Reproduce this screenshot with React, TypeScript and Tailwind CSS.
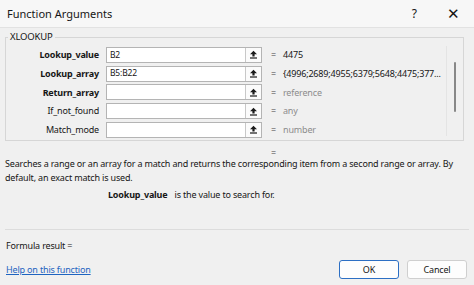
import React from "react";

function RefIcon() {
  return (
    <svg width="9" height="9" viewBox="0 0 9 9">
      <path d="M4.5 0.8 L8 4.3 L5.6 4.3 L5.6 6.4 L3.4 6.4 L3.4 4.3 L1 4.3 Z" fill="#1a1a1a" />
      <rect x="1" y="7.4" width="7" height="1.2" fill="#1a1a1a" />
    </svg>
  );
}

const rows = [
  { label: "Lookup_value", bold: true, input: "B2", value: "4475", gray: false },
  { label: "Lookup_array", bold: true, input: "B5:B22", value: "{4996;2689;4955;6379;5648;4475;377...", gray: false },
  { label: "Return_array", bold: true, input: "", value: "reference", gray: true },
  { label: "If_not_found", bold: false, input: "", value: "any", gray: true },
  { label: "Match_mode", bold: false, input: "", value: "number", gray: true },
];

export default function App() {
  return (
    <div className="w-[474px] h-[285px] bg-[#f0f0f0] font-['Noto_Sans',sans-serif] text-[9px] tracking-[-0.17px] text-[#161616] flex flex-col overflow-hidden">
      <div className="h-[28px] shrink-0 bg-[#f7f7f7] border-b border-[#e2e2e2] flex items-center tracking-normal">
        <span className="pl-[7px] text-[11px] leading-none">Function Arguments</span>
        <span className="ml-auto mr-[30px] text-[12px] leading-none">?</span>
        <span className="mr-[14px] text-[15px] leading-none font-light">✕</span>
      </div>

      <fieldset className="mt-[3px] ml-[5px] w-[459px] border border-[#d6d6d6] pb-[1px] flex">
        <legend className="ml-[2px] px-[2px] leading-[12px] text-[9.5px]">XLOOKUP</legend>
        <div className="flex w-full">
          <div className="flex flex-col pt-[2.5px] w-[440px]">
            {rows.map((r) => (
              <div key={r.label} className="h-[18.75px] flex items-center">
                <div className={`w-[93px] text-right ${r.bold ? "font-bold" : ""}`}>{r.label}</div>
                <div className="ml-[7px] w-[156px] h-[16px] bg-white border border-[#b4b4b4] flex items-center">
                  <span className="pl-[3px] flex-1 text-[8.5px]">{r.input}</span>
                  <div className="w-[16px] h-full border-l border-[#c8c8c8] bg-[#fbfbfb] flex items-center justify-center">
                    <RefIcon />
                  </div>
                </div>
                <span className="ml-[9px] text-[#444]">=</span>
                <span className={`ml-[7px] whitespace-nowrap ${r.gray ? "text-[#8c8c8c]" : ""}`}>{r.value}</span>
              </div>
            ))}
          </div>
          <div className="ml-auto w-[17px] my-[3px] border-l border-[#e4e4e4] flex justify-center pt-[16px]">
            <div className="w-[2px] h-[50px] bg-[#888888] rounded-full" />
          </div>
        </div>
      </fieldset>

      <div className="mt-[7px] h-[9px] leading-[9px] pl-[271px] text-[#444]">=</div>
      <div className="px-[5px] leading-[14px] whitespace-nowrap">
        Searches a range or an array for a match and returns the corresponding item from a second range or array. By
        <br />
        default, an exact match is used.
      </div>
      <div className="mt-[4px] leading-[12px] flex pl-[108px]">
        <span className="font-bold">Lookup_value</span>
        <span className="ml-[7px]">is the value to search for.</span>
      </div>

      <div className="mt-[28px] mx-[5px] border-t border-[#dcdcdc]" />
      <div className="mt-[10px] px-[6px] leading-[12px]">Formula result =</div>
      <div className="mt-[7px] h-[20px] flex items-center px-[6px]">
        <span className="text-[#1f64c0] underline">Help on this function</span>
        <button className="ml-auto w-[60px] h-[19px] bg-[#fdfdfd] border border-[#2c6fc4] rounded-[3px] text-[9px] leading-none">OK</button>
        <button className="ml-[8px] mr-[1px] w-[60px] h-[19px] bg-[#fdfdfd] border border-[#cfcfcf] rounded-[3px] text-[9px] leading-none">Cancel</button>
      </div>
    </div>
  );
}
